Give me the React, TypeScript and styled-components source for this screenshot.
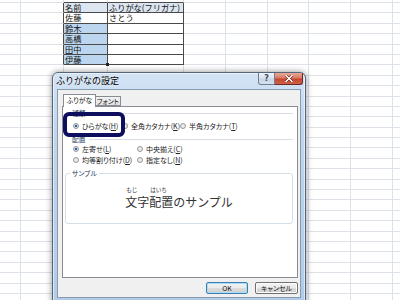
import React from "react";
import styled, { createGlobalStyle } from "styled-components";

const GlobalStyle = createGlobalStyle`
  html, body { margin: 0; padding: 0; background: #ffffff; }
  body { font-family: "Noto Sans CJK JP", "Noto Sans", sans-serif; }
`;

const COLS = [21, 43, 44, 76, 42, 42, 41, 42, 42, 42];
const ROW_COUNT = 29;
const GRID = "#dde2e8";
const DARK = "#4a4a4a";

const TABLE: string[][] = [
  ["名前", "ふりがな(フリガナ)"],
  ["佐藤", "さとう"],
  ["鈴木", ""],
  ["高橋", ""],
  ["田中", ""],
  ["伊藤", ""],
];
const T_ROW0 = 1;
const T_COL0 = 2;

const Page = styled.div`
  position: relative;
  width: 400px;
  height: 300px;
  overflow: hidden;
  background: #ffffff;
`;

const Sheet = styled.div`
  display: grid;
  grid-template-columns: ${COLS.map((c) => c + "px").join(" ")};
  grid-template-rows: 3px repeat(${ROW_COUNT}, 10.4px);
`;

const Cell = styled.div<{ $bg: string; $right: string; $bottom: string; $handle?: boolean }>`
  position: relative;
  box-sizing: border-box;
  background: ${(p) => p.$bg};
  border-right: 1px solid ${(p) => p.$right};
  border-bottom: 1px solid ${(p) => p.$bottom};
  font-size: 8.2px;
  line-height: 9.4px;
  padding-left: 1px;
  white-space: nowrap;
  color: #111;
  &::after {
    content: "";
    display: ${(p) => (p.$handle ? "block" : "none")};
    position: absolute;
    right: -2px;
    bottom: -2px;
    width: 3px;
    height: 3px;
    background: #222;
    z-index: 2;
  }
`;

const Dialog = styled.div`
  position: absolute;
  left: 52px;
  top: 72px;
  width: 254px;
  height: 232px;
  box-sizing: border-box;
  border: 1px solid #55667c;
  border-radius: 6px 6px 0 0;
  background: linear-gradient(180deg, #d3e3f4 0%, #c0d6ee 25%, #b2cbe7 100%);
  box-shadow: 0 0 6px rgba(0, 0, 0, 0.45), inset 0 0 0 1px rgba(255, 255, 255, 0.55);
  display: flex;
  flex-direction: column;
`;

const TitleBar = styled.div`
  height: 16px;
  display: flex;
  align-items: flex-start;
`;

const Title = styled.div`
  padding-left: 3px;
  font-size: 9px;
  line-height: 16px;
  color: #000;
  text-shadow: 0 0 3px rgba(255, 255, 255, 0.9);
`;

const CaptionButtons = styled.div`
  margin-left: auto;
  margin-right: 2px;
  display: flex;
`;

const CaptionButton = styled.div<{ $close?: boolean }>`
  box-sizing: border-box;
  width: ${(p) => (p.$close ? 28 : 17)}px;
  height: 12px;
  display: flex;
  align-items: center;
  justify-content: center;
  border: 1px solid ${(p) => (p.$close ? "#6b2b22" : "#6f7e92")};
  border-top: none;
  border-left-width: ${(p) => (p.$close ? 0 : 1)}px;
  border-radius: ${(p) => (p.$close ? "0 0 3px 0" : "0 0 0 3px")};
  background: ${(p) =>
    p.$close
      ? "linear-gradient(180deg, #e9a895 0%, #d87a64 45%, #c7442c 55%, #d0614a 100%)"
      : "linear-gradient(180deg, #eef3f9 0%, #dbe4ef 45%, #c8d5e5 55%, #d7e2ee 100%)"};
  font-size: 8px;
  line-height: 10px;
  font-weight: bold;
  color: #3a4a60;
  font-family: "DejaVu Sans", sans-serif;
`;

const Client = styled.div`
  flex: 1;
  margin: 0 4px 5px 4px;
  box-sizing: border-box;
  background: #f0f0f0;
  border: 1px solid #8a9bb0;
  padding: 4px 2px 0 4px;
  display: flex;
  flex-direction: column;
  font-feature-settings: "palt";
`;

const TabStrip = styled.div`
  height: 12px;
  display: flex;
  align-items: flex-end;
  padding-left: 1px;
  position: relative;
  z-index: 1;
`;

const Tab = styled.div<{ $active?: boolean }>`
  box-sizing: border-box;
  width: ${(p) => (p.$active ? 33 : 25)}px;
  height: ${(p) => (p.$active ? 13 : 10)}px;
  margin-bottom: ${(p) => (p.$active ? -1 : 0)}px;
  border: 1px solid #898c95;
  border-bottom: ${(p) => (p.$active ? "none" : "1px solid #898c95")};
  border-left-width: ${(p) => (p.$active ? 1 : 0)}px;
  background: ${(p) => (p.$active ? "#ffffff" : "linear-gradient(180deg, #f3f3f3, #e2e2e2)")};
  font-size: 6.8px;
  line-height: ${(p) => (p.$active ? 11 : 8)}px;
  text-align: center;
  color: #111;
  white-space: nowrap;
`;

const Panel = styled.div`
  height: 172px;
  box-sizing: border-box;
  border: 1px solid #898c95;
  background: #ffffff;
  padding: 1px 4px 0 2px;
  display: flex;
  flex-direction: column;
`;

const GroupHeader = styled.div<{ $gap?: number }>`
  margin-top: ${(p) => p.$gap ?? 0}px;
  height: 10px;
  line-height: 9px;
  padding-left: 7px;
  display: flex;
  align-items: center;
  gap: 3px;
  font-size: 6.8px;
  color: #1e395b;
  &::after {
    content: "";
    flex: 1;
    height: 1px;
    background: #d8dde3;
  }
`;

const RadioRow = styled.div<{ $cols: string; $gap?: number }>`
  margin-top: ${(p) => p.$gap ?? 0}px;
  height: 10px;
  padding-left: 8px;
  display: grid;
  grid-template-columns: ${(p) => p.$cols};
  align-items: center;
`;

const RadioItem = styled.label`
  display: flex;
  align-items: center;
  gap: 3px;
  font-size: 7px;
  line-height: 9px;
  color: #222;
  white-space: nowrap;
`;

const RadioCircle = styled.span<{ $on?: boolean }>`
  box-sizing: border-box;
  width: 6px;
  height: 6px;
  border-radius: 50%;
  border: 1px solid #999;
  background: ${(p) =>
    p.$on
      ? "radial-gradient(circle, #1f63b8 0 1.3px, #e4e4e4 1.6px)"
      : "radial-gradient(circle, #ececec 0 40%, #dcdcdc 100%)"};
`;

const SampleBox = styled.fieldset`
  margin: 3px 0 0 0;
  padding: 0;
  height: 56px;
  box-sizing: border-box;
  border: 1px solid #d5dfe5;
  border-radius: 3px;
  min-width: 0;
`;

const Legend = styled.legend`
  margin-left: 4px;
  padding: 0 2px;
  font-size: 6.8px;
  line-height: 10px;
  color: #1e395b;
`;

const SampleLine = styled.div`
  padding-top: 9px;
  display: flex;
  justify-content: center;
  align-items: flex-end;
  font-feature-settings: normal;
`;

const RubyUnit = styled.span`
  display: inline-flex;
  flex-direction: column;
  align-items: flex-start;
  gap: 1px;
`;

const RubyText = styled.span`
  font-size: 5.6px;
  line-height: 7px;
  padding-left: 1px;
  color: #333;
`;

const BaseText = styled.span`
  font-size: 12px;
  line-height: 13px;
  color: #333;
`;

const ButtonRow = styled.div`
  margin-top: 4px;
  display: flex;
  justify-content: flex-end;
  gap: 7px;
`;

const PushButton = styled.div<{ $default?: boolean; $w: number }>`
  box-sizing: border-box;
  width: ${(p) => p.$w}px;
  height: 12px;
  border: 1px solid ${(p) => (p.$default ? "#3c7fb1" : "#707070")};
  border-radius: 2px;
  background: linear-gradient(180deg, #f2f2f2 0%, #ebebeb 50%, #dddddd 51%, #cfcfcf 100%);
  box-shadow: ${(p) => (p.$default ? "inset 0 0 0 1px #a9dcf6" : "inset 0 0 0 1px #fcfcfc")};
  font-size: 6.8px;
  line-height: 10px;
  text-align: center;
  color: #111;
`;

const Highlight = styled.div`
  position: absolute;
  left: 63px;
  top: 112px;
  width: 62px;
  height: 25px;
  box-sizing: border-box;
  border: 4px solid #0e0e5e;
  border-radius: 6px;
`;

function Radio({ on, label, acc }: { on?: boolean; label: string; acc: string }) {
  return (
    <RadioItem>
      <RadioCircle $on={on} />
      <span>
        {label}(<u>{acc}</u>)
      </span>
    </RadioItem>
  );
}

function SheetGrid() {
  const cells: React.ReactNode[] = [];
  for (let r = 0; r < ROW_COUNT + 1; r++) {
    for (let c = 0; c < COLS.length; c++) {
      const tr = r - T_ROW0;
      const tc = c - T_COL0;
      const inTable = tr >= 0 && tr < TABLE.length && tc >= 0 && tc < 2;
      const aboveTable = r === T_ROW0 - 1 && tc >= 0 && tc < 2;
      const leftOfTable = c === T_COL0 - 1 && tr >= 0 && tr < TABLE.length;
      let bg = "#ffffff";
      if (inTable && tr === 0) bg = "#dce5f0";
      else if (inTable && tc === 0 && tr >= 2) bg = "#bdd6f0";
      cells.push(
        <Cell
          key={`${r}-${c}`}
          $bg={bg}
          $right={inTable || leftOfTable ? DARK : GRID}
          $bottom={inTable || aboveTable ? DARK : GRID}
          $handle={inTable && tc === 0 && tr === TABLE.length - 1}
        >
          {inTable ? TABLE[tr][tc] : null}
        </Cell>
      );
    }
  }
  return <Sheet>{cells}</Sheet>;
}

export default function App() {
  return (
    <>
      <GlobalStyle />
      <Page>
        <SheetGrid />
        <Dialog>
          <TitleBar>
            <Title>ふりがなの設定</Title>
            <CaptionButtons>
              <CaptionButton>?</CaptionButton>
              <CaptionButton $close>
                <svg width="8" height="7" viewBox="0 0 8 7">
                  <path d="M1 0.5 L7 6.5 M7 0.5 L1 6.5" stroke="#5a1a10" strokeWidth="2.6" strokeLinecap="square" />
                  <path d="M1 0.5 L7 6.5 M7 0.5 L1 6.5" stroke="#ffffff" strokeWidth="1.5" strokeLinecap="square" />
                </svg>
              </CaptionButton>
            </CaptionButtons>
          </TitleBar>
          <Client>
            <TabStrip>
              <Tab $active>ふりがな</Tab>
              <Tab>フォント</Tab>
            </TabStrip>
            <Panel>
              <GroupHeader>種類</GroupHeader>
              <RadioRow $cols="49px 58px auto" $gap={3}>
                <Radio on label="ひらがな" acc="H" />
                <Radio label="全角カタカナ" acc="K" />
                <Radio label="半角カタカナ" acc="T" />
              </RadioRow>
              <GroupHeader $gap={3}>配置</GroupHeader>
              <RadioRow $cols="64px auto">
                <Radio on label="左寄せ" acc="L" />
                <Radio label="中央揃え" acc="C" />
              </RadioRow>
              <RadioRow $cols="64px auto" $gap={1}>
                <Radio label="均等割り付け" acc="D" />
                <Radio label="指定なし" acc="N" />
              </RadioRow>
              <SampleBox>
                <Legend>サンプル</Legend>
                <SampleLine>
                  <RubyUnit>
                    <RubyText>もじ</RubyText>
                    <BaseText>文字</BaseText>
                  </RubyUnit>
                  <RubyUnit>
                    <RubyText>はいち</RubyText>
                    <BaseText>配置</BaseText>
                  </RubyUnit>
                  <BaseText>のサンプル</BaseText>
                </SampleLine>
              </SampleBox>
            </Panel>
            <ButtonRow>
              <PushButton $default $w={42}>OK</PushButton>
              <PushButton $w={43}>キャンセル</PushButton>
            </ButtonRow>
          </Client>
        </Dialog>
        <Highlight />
      </Page>
    </>
  );
}
